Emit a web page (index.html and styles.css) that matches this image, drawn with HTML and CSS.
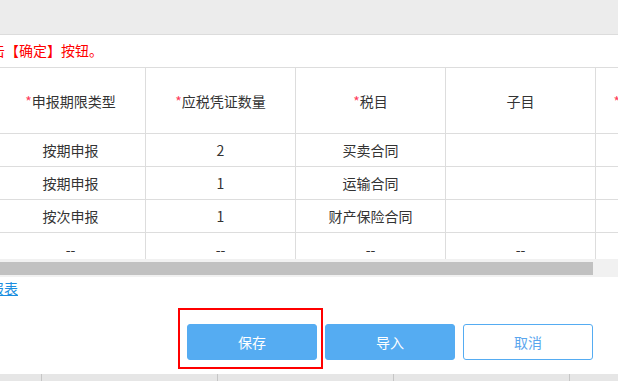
FILE: index.html
```html
<!DOCTYPE html>
<html lang="zh-CN">
<head>
<meta charset="UTF-8">
<meta name="viewport" content="width=device-width, initial-scale=1.0">
<title>印花税申报</title>
<link rel="stylesheet" href="styles.css">
</head>
<body>
    <div class="topbar"></div>

    <div class="note">请点击【确定】按钮。</div>

    <div class="grid-wrap">
        <table class="grid">
            <thead>
                <tr>
                    <th><span class="req">*</span>申报期限类型</th>
                    <th><span class="req">*</span>应税凭证数量</th>
                    <th><span class="req">*</span>税目</th>
                    <th>子目</th>
                    <th><span class="req">*</span>计税金额(或件数)</th>
                </tr>
            </thead>
            <tbody>
                <tr>
                    <td>按期申报</td>
                    <td>2</td>
                    <td>买卖合同</td>
                    <td></td>
                    <td>按合同所载金额</td>
                </tr>
                <tr>
                    <td>按期申报</td>
                    <td>1</td>
                    <td>运输合同</td>
                    <td></td>
                    <td>按合同所载金额</td>
                </tr>
                <tr>
                    <td>按次申报</td>
                    <td>1</td>
                    <td>财产保险合同</td>
                    <td></td>
                    <td>按合同所载金额</td>
                </tr>
                <tr>
                    <td>--</td>
                    <td>--</td>
                    <td>--</td>
                    <td>--</td>
                    <td>--</td>
                </tr>
            </tbody>
        </table>
    </div>
    <div class="scrollbar"><div class="thumb"></div></div>

    <div class="link-row"><a href="#" class="link">导入报表</a></div>

    <div class="actions">
        <span class="marked"><button class="btn btn-primary">保存</button></span>
        <button class="btn btn-primary">导入</button>
        <button class="btn btn-plain">取消</button>
    </div>

    <div class="bottom-strip">
        <div></div><div></div><div></div><div></div><div></div>
    </div>
</body>
</html>
```

FILE: styles.css
```css
body {
    margin: 0;
    font-family: "Noto Sans CJK SC", "Noto Sans", sans-serif;
    font-size: 14px;
    color: #333;
    background-color: #fff;
    overflow: hidden;
}
.topbar {
    height: 34px;
    background-color: #ececec;
    border-bottom: 1px solid #dcdcdc;
}
.note {
    height: 32px;
    line-height: 31px;
    color: #ff0000;
    white-space: nowrap;
    overflow: hidden;
    text-indent: -37px;
}
.grid-wrap {
    height: 192px;
    overflow: hidden;
}
.grid {
    margin-left: -5px;
    width: 751px;
    table-layout: fixed;
    border-collapse: collapse;
}
.grid th,
.grid td {
    width: 149px;
    padding: 0;
    text-align: center;
    font-weight: normal;
    border: 1px solid #dddddd;
    white-space: nowrap;
    overflow: hidden;
}
.grid thead tr {
    height: 66px;
}
.grid tbody tr {
    height: 33px;
}
.req {
    color: #ff3b5c;
}
.scrollbar {
    height: 18px;
    background-color: #f1f1f1;
    padding-top: 3px;
    box-sizing: border-box;
}
.thumb {
    width: 593px;
    height: 13px;
    background-color: #c1c1c1;
}
.link-row {
    height: 22px;
    line-height: 22px;
    white-space: nowrap;
    overflow: hidden;
    text-indent: -38px;
}
.link {
    color: #1a8ee0;
    text-decoration: underline;
}
.actions {
    display: flex;
    justify-content: flex-end;
    gap: 8px;
    padding-right: 25px;
    margin-top: 25px;
}
.btn {
    width: 130px;
    height: 36px;
    border-radius: 3px;
    font-family: inherit;
    font-size: 14px;
    cursor: pointer;
}
.btn-primary {
    background-color: #55acf2;
    border: 1px solid #55acf2;
    color: #fff;
}
.btn-plain {
    background-color: #fff;
    border: 1px solid #55acf2;
    color: #5aa6ee;
}
.marked {
    position: relative;
    display: flex;
}
.marked::after {
    content: "";
    position: absolute;
    top: -16px;
    left: -9px;
    right: -6px;
    bottom: -9px;
    border: 2px solid #ff0000;
    pointer-events: none;
}
.bottom-strip {
    margin-top: 14px;
    height: 7px;
    display: grid;
    grid-template-columns: 42px 176px 176px 176px 1fr;
    background-color: #e6e6e6;
}
.bottom-strip div {
    border-right: 1px solid #c6c6c6;
}
.bottom-strip div:last-child {
    border-right: none;
}
```
